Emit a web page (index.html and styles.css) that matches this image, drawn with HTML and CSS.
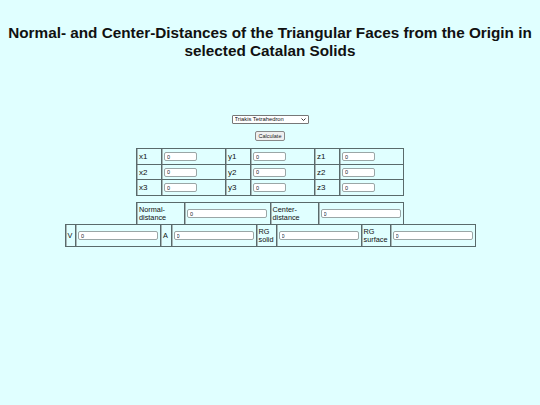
FILE: index.html
```html
<!DOCTYPE html>
<html lang="en">
<head>
<meta charset="utf-8">
<title>Catalan Solids – Face Distances</title>
<link rel="stylesheet" href="styles.css">
</head>
<body>
<h1 class="title">Normal- and Center-Distances of the Triangular Faces from the Origin in selected Catalan Solids</h1>

<div class="controls">
  <span class="select-wrap">
    <select class="solid-select">
      <option>Triakis Tetrahedron</option>
      <option>Tetrakis Hexahedron</option>
      <option>Triakis Octahedron</option>
      <option>Pentakis Dodecahedron</option>
      <option>Triakis Icosahedron</option>
    </select>
    <svg class="chevron" width="5" height="3" viewBox="0 0 5 3" aria-hidden="true">
      <path d="M0.5 0.5 L2.5 2.5 L4.5 0.5" fill="none" stroke="#222" stroke-width="0.9"/>
    </svg>
  </span>
  <button class="calc-btn" type="button">Calculate</button>
</div>

<table class="grid coords">
  <tr>
    <td class="lbl">x1</td><td class="fld"><input class="small" value="0"></td>
    <td class="lbl">y1</td><td class="fld"><input class="small" value="0"></td>
    <td class="lbl">z1</td><td class="fld"><input class="small" value="0"></td>
  </tr>
  <tr>
    <td class="lbl">x2</td><td class="fld"><input class="small" value="0"></td>
    <td class="lbl">y2</td><td class="fld"><input class="small" value="0"></td>
    <td class="lbl">z2</td><td class="fld"><input class="small" value="0"></td>
  </tr>
  <tr>
    <td class="lbl">x3</td><td class="fld"><input class="small" value="0"></td>
    <td class="lbl">y3</td><td class="fld"><input class="small" value="0"></td>
    <td class="lbl">z3</td><td class="fld"><input class="small" value="0"></td>
  </tr>
</table>

<table class="grid distances">
  <tr>
    <td class="lbl wide">Normal-<br>distance</td><td class="fld"><input class="large" value="0"></td>
    <td class="lbl wide">Center-<br>distance</td><td class="fld"><input class="large" value="0"></td>
  </tr>
</table>

<table class="grid results">
  <tr>
    <td class="lbl narrow">V</td><td class="fld"><input class="large" value="0"></td>
    <td class="lbl narrow">A</td><td class="fld"><input class="large" value="0"></td>
    <td class="lbl">RG<br>solid</td><td class="fld"><input class="large" value="0"></td>
    <td class="lbl">RG<br>surface</td><td class="fld"><input class="large" value="0"></td>
  </tr>
</table>
</body>
</html>
```

FILE: styles.css
```css
body {
  margin: 0;
  background: #e0ffff;
  color: #111;
  font-family: "Liberation Sans", Arial, sans-serif;
}

.title {
  margin: 24px 6px 0;
  font-size: 15.3px;
  line-height: 18px;
  text-align: center;
}

.controls {
  display: flex;
  flex-direction: column;
  align-items: center;
  gap: 7px;
  margin-top: 55px;
}

/* wrapper so the small chevron can sit over the native select */
.select-wrap {
  position: relative;
  display: inline-block;
  height: 9px;
}

.solid-select {
  appearance: none;
  -webkit-appearance: none;
  display: block;
  box-sizing: border-box;
  width: 77px;
  height: 9px;
  padding: 0 2px;
  font-family: inherit;
  font-size: 5.8px;
  line-height: 7px;
  color: #111;
  border: 1px solid #777;
  border-radius: 1px;
  background: #fff;
}

.chevron {
  position: absolute;
  right: 3px;
  top: 3px;
  pointer-events: none;
}

.calc-btn {
  width: 30px;
  height: 10px;
  padding: 0;
  font-family: inherit;
  font-size: 5.5px;
  color: #222;
  background: #efefef;
  border: 1px solid #888;
  border-radius: 2px;
}

.grid {
  border-collapse: collapse;
  margin: 0 auto;
  font-size: 8px;
  line-height: 9px;
}

.grid td {
  border: 1px solid #5a6a6b;
  box-shadow: inset 1px 0 0 #a8b8b8;
  padding: 0 2px;
  text-align: left;
  vertical-align: middle;
}

.coords {
  margin-top: 7px;
  width: 268px;
}

.coords td {
  height: 14.7px;
}

.coords .lbl {
  width: 20px;
}

.distances {
  margin-top: 6px;
  width: 268px;
}

.distances td,
.results td {
  height: 21px;
}

.distances .wide {
  width: 43px;
  font-size: 7.3px;
  line-height: 8px;
}

.results {
  margin-top: -1px;
  width: 411px;
  font-size: 7.3px;
  line-height: 8px;
}

.results .narrow {
  width: 8px;
}

input {
  box-sizing: border-box;
  padding: 0 2px;
  font-family: inherit;
  font-size: 5.5px;
  color: #222;
  background: #fff;
  border: 1px solid #9aa6a6;
  border-radius: 2px;
}

input.small {
  width: 33px;
  height: 9px;
}

input.large {
  width: 80px;
  height: 9px;
}
```
